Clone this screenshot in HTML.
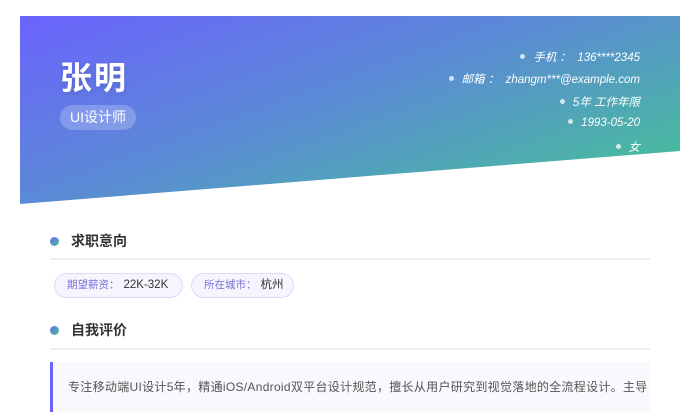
<!DOCTYPE html>
<html><head><meta charset="utf-8"><style>
*{margin:0;padding:0;box-sizing:border-box}
body{width:700px;height:400px;overflow:hidden;background:#fff;font-family:"Liberation Sans","Noto Sans CJK SC",sans-serif;position:relative}
.hdr{position:absolute;left:20px;top:16px;width:660px;height:188px;background:linear-gradient(160deg,#6b63fd 0%,#5b8ad6 45%,#44c790 100%);clip-path:polygon(0 0,100% 0,100% 135px,0 188px)}
.name{position:absolute;left:60px;top:53px;font-size:32px;font-weight:bold;color:#fff;letter-spacing:2px;text-shadow:0 2px 6px rgba(0,0,0,.12)}
.role{position:absolute;left:60px;top:105px;height:25px;padding:0 10px;line-height:25px;border-radius:13px;background:rgba(255,255,255,.22);color:#fff;font-size:14px}
.ct{position:absolute;right:60px;font-size:11.5px;font-style:italic;color:#fff;white-space:pre}
.ct:before{content:"";display:inline-block;width:5px;height:5px;border-radius:50%;background:rgba(255,255,255,.75);margin-right:8px;vertical-align:2px}
.st{position:absolute;left:50px;font-size:14px;font-weight:bold;color:#333}
.st i{display:inline-block;width:9px;height:9px;border-radius:50%;background:linear-gradient(135deg,#6b63fd,#44c790);margin-right:12px;vertical-align:0}
.ln{position:absolute;left:50px;width:600px;height:2px;background:#eeeef0}
.tag{position:absolute;top:273px;height:25px;line-height:23px;border:1px solid #ddd9f8;background:#f6f5fe;border-radius:13px;font-size:10.5px;color:#7a72d8;padding:0 12px;white-space:nowrap}
.tag b{font-weight:normal;color:#333;margin-left:4px;font-size:11.5px}
.q{position:absolute;left:50px;top:362px;width:600px;height:50px;background:#f8f8fd;border-left:3px solid #6b63fd;padding:16px 0 0 15px;font-size:12px;letter-spacing:0.3px;color:#555;white-space:nowrap;overflow:hidden}
</style></head><body>
<div class="hdr"></div>
<div class="name">张明</div>
<div class="role">UI设计师</div>
<div class="ct" style="top:49px">手机 ：  136****2345</div>
<div class="ct" style="top:71px">邮箱 ：  zhangm***@example.com</div>
<div class="ct" style="top:94px">5年 工作年限</div>
<div class="ct" style="top:117px">1993-05-20</div>
<div class="ct" style="top:139px">女</div>
<div class="st" style="top:231px"><i></i>求职意向</div>
<div class="ln" style="top:258px"></div>
<div class="tag" style="left:54px;width:129px">期望薪资：<b>22K-32K</b></div>
<div class="tag" style="left:191px;width:103px">所在城市：<b>杭州</b></div>
<div class="st" style="top:320px"><i></i>自我评价</div>
<div class="ln" style="top:348px"></div>
<div class="q">专注移动端UI设计5年，精通iOS/Android双平台设计规范，擅长从用户研究到视觉落地的全流程设计。主导</div>
</body></html>
